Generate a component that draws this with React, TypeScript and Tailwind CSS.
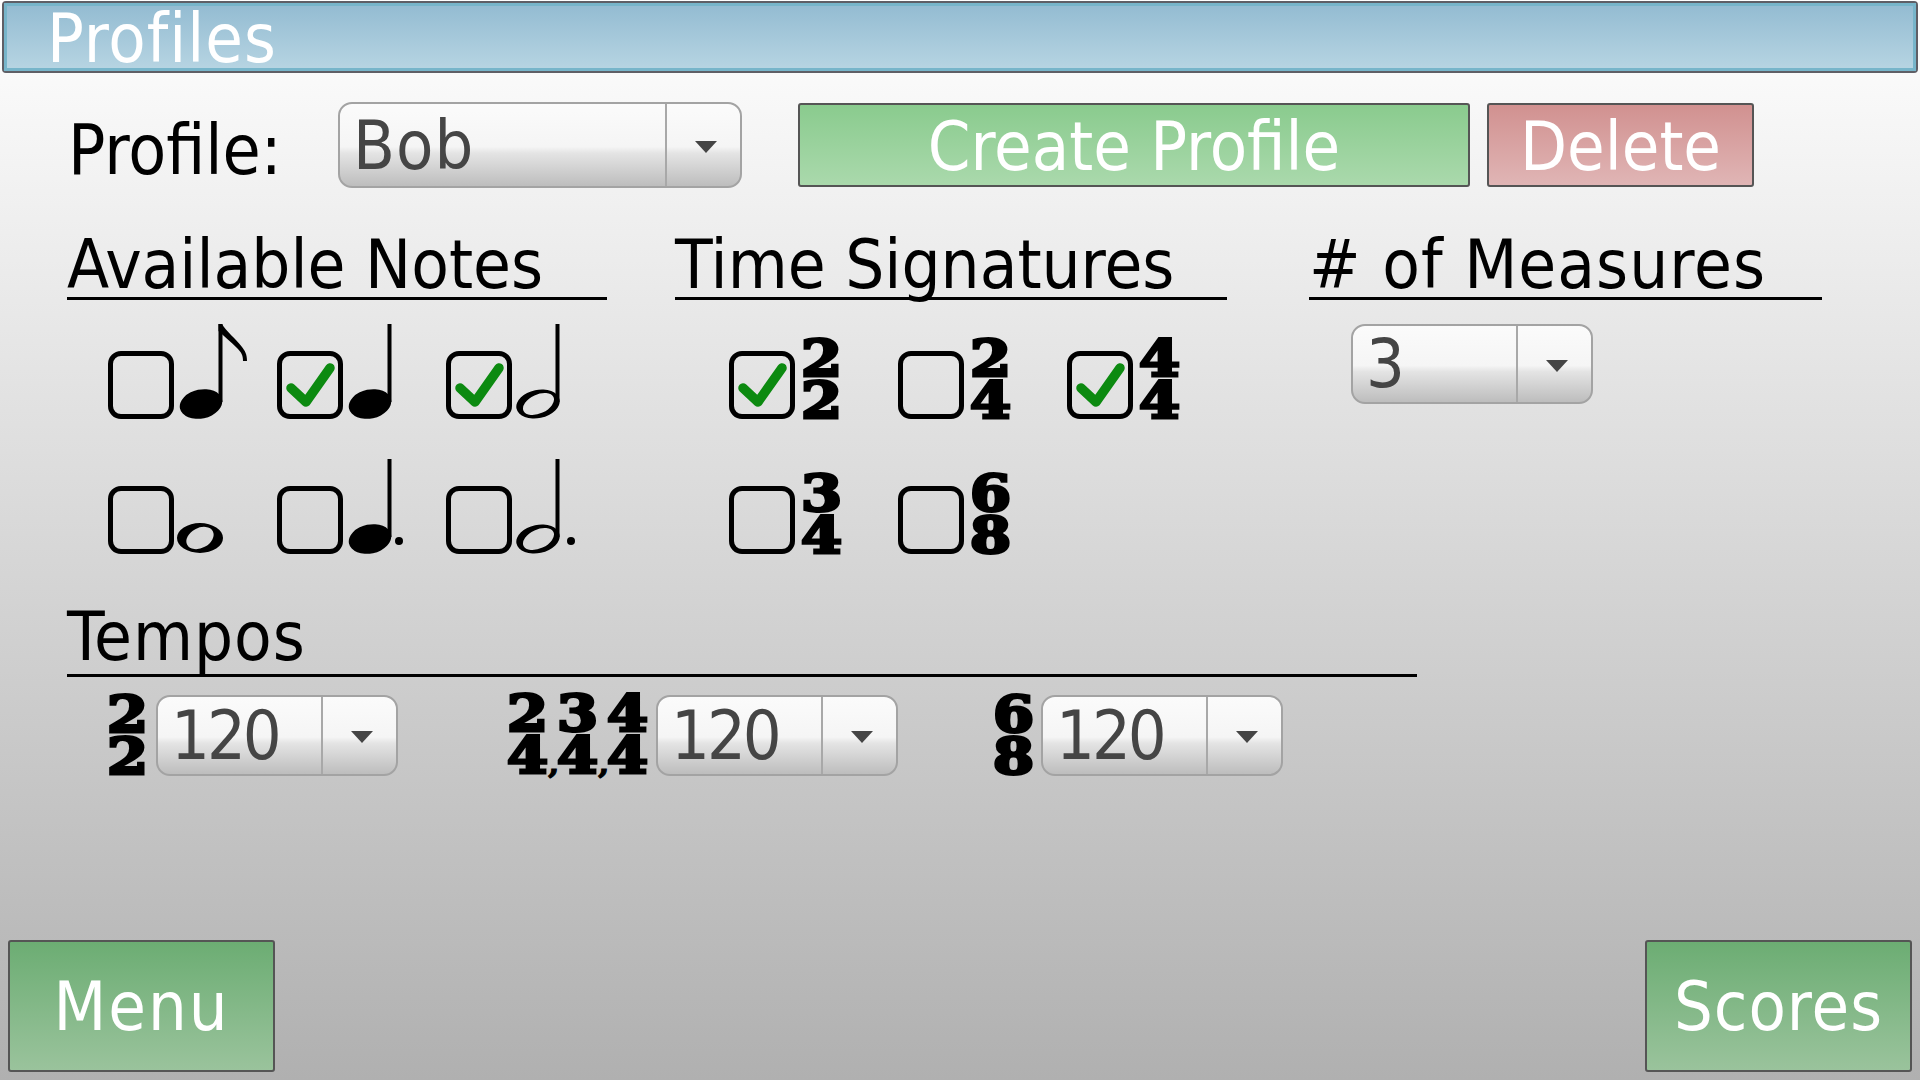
import React, { FC, ReactNode } from "react";

const sans = "font-['DejaVu_Sans_Condensed','DejaVu_Sans',sans-serif] [font-stretch:condensed]";

interface ComboProps {
  value: string;
  className: string;
  textClass?: string;
}

const Combo: FC<ComboProps> = ({ value, className, textClass }) => (
  <div
    className={[
      "flex shrink-0 rounded-[14px] border-2 border-[#a3a3a3] text-[#454545] text-[68px] leading-none",
      "bg-[linear-gradient(180deg,#fbfbfb_0%,#f5f5f5_52%,#e4e4e4_60%,#bdbdbd_100%)]",
      className,
    ].join(" ")}
  >
    <div className={["flex flex-1 items-center pl-[13px]", textClass ?? ""].join(" ")}>{value}</div>
    <div className="flex w-[75px] items-center justify-center border-l-2 border-[#a8a8a8] pt-[3px]">
      <div className="ml-[5px] h-0 w-0 border-x-[11px] border-t-[12px] border-x-transparent border-t-[#454545]" />
    </div>
  </div>
);

// ellipse as a path so open noteheads can use evenodd
const ell = (cx: number, cy: number, rx: number, ry: number, rot: number) => {
  const a = (rot * Math.PI) / 180;
  const dx = rx * Math.cos(a);
  const dy = rx * Math.sin(a);
  return `M${cx - dx} ${cy - dy}A${rx} ${ry} ${rot} 1 0 ${cx + dx} ${cy + dy}A${rx} ${ry} ${rot} 1 0 ${cx - dx} ${cy - dy}Z`;
};

type NoteKind = "eighth" | "quarter" | "half" | "whole" | "dottedQuarter" | "dottedHalf";

const Note: FC<{ kind: NoteKind }> = ({ kind }) => {
  const open = kind === "half" || kind === "dottedHalf";
  const dotted = kind === "dottedQuarter" || kind === "dottedHalf";
  return (
    <svg width="90" height="100" viewBox="0 0 90 100" className="shrink-0">
      {kind === "whole" ? (
        <path
          fillRule="evenodd"
          d={ell(26, 81, 23, 15, 0) + ell(26, 81, 14.5, 10, -28)}
          fill="#000"
        />
      ) : open ? (
        <path
          fillRule="evenodd"
          d={ell(26, 82, 22, 14, -12) + ell(26.5, 82, 16.5, 9.5, -25)}
          fill="#000"
        />
      ) : (
        <ellipse cx="27" cy="82" rx="21.5" ry="14.5" transform="rotate(-12 27 82)" fill="#000" />
      )}
      {kind !== "whole" && <rect x={open ? 43.5 : 44.5} y="2" width="4" height="78" fill="#000" />}
      {kind === "eighth" && (
        <path d="M44.5 2L48 2C52 9 62 17 68 25C71 29 73 32 73 39L69 39C69 33 67 30 63 26C57 20 50 14 44.5 9Z" fill="#000" />
      )}
      {dotted && <circle cx={open ? 59 : 56} cy="84" r="4" fill="#000" />}
    </svg>
  );
};

const CheckBox: FC<{ checked?: boolean }> = ({ checked }) => (
  <div className="mb-[3px] h-[68px] w-[66px] shrink-0 rounded-[13px] border-[5px] border-black">
    {checked && (
      <svg width="56" height="58" viewBox="0 0 56 58">
        <path d="M9 32L24 46L48 12" fill="none" stroke="#0c8a10" strokeWidth="9.5" strokeLinecap="round" strokeLinejoin="round" />
      </svg>
    )}
  </div>
);

const Sig: FC<{ top: string; bottom: ReactNode; className?: string }> = ({ top, bottom, className }) => (
  <div
    className={[
      "shrink-0 origin-left scale-x-[1.18] whitespace-pre font-['DejaVu_Serif',serif] text-[50px] font-bold leading-[42px] text-black [-webkit-text-stroke:3px_black] [font-stretch:normal]",
      className ?? "",
    ].join(" ")}
  >
    <div>{top}</div>
    <div>{bottom}</div>
  </div>
);

const Comma = () => <span className="text-[28px] leading-none [-webkit-text-stroke:1px_black]">,</span>;

const Heading: FC<{ label: string; className: string }> = ({ label, className }) => (
  <div className={["flex items-end border-b-[3px] border-black text-black text-[68.5px] leading-none", className].join(" ")}>
    <span className="mb-[-1px]">{label}</span>
  </div>
);

const noteCells: { kind: NoteKind; checked?: boolean }[] = [
  { kind: "eighth" },
  { kind: "quarter", checked: true },
  { kind: "half", checked: true },
  { kind: "whole" },
  { kind: "dottedQuarter" },
  { kind: "dottedHalf" },
];

const sigCells = [
  { top: "2", bottom: "2", checked: true },
  { top: "2", bottom: "4" },
  { top: "4", bottom: "4", checked: true },
  { top: "3", bottom: "4" },
  { top: "6", bottom: "8" },
];

const greenBtn = "bg-[linear-gradient(180deg,#6cad73_0%,#9ac39c_100%)]";

export default function App() {
  return (
    <div className={`flex h-[1080px] w-[1920px] flex-col overflow-hidden bg-[linear-gradient(180deg,#ffffff_0%,#b0b0b0_100%)] ${sans}`}>
      <div className="mx-[2px] mt-[1px] h-[72px] rounded-[4px] border-2 border-[#5f5f66]">
        <div className="flex h-full items-center border-[3px] border-[#77b5ca] bg-[linear-gradient(180deg,#94bcd2_0%,#b6d4e2_100%)] pl-[40px] pt-[4px] text-[68px] leading-none tracking-[1px] text-white">
          Profiles
        </div>
      </div>

      <div className="mt-[29px] flex h-[86px] items-center pl-[68px]">
        <div className="w-[270px] pt-[10px] text-[69px] leading-none text-black">Profile:</div>
        <Combo value="Bob" className="h-[86px] w-[404px]" textClass="pt-[2px] tracking-[1px]" />
        <div className="ml-[56px] flex h-[84px] w-[672px] items-center justify-center rounded-[3px] border-2 border-[#555] bg-[linear-gradient(180deg,#8acb8e_0%,#aad9ac_100%)] pt-[4px] text-[68px] leading-none text-white">
          Create Profile
        </div>
        <div className="ml-[17px] flex h-[84px] w-[267px] items-center justify-center rounded-[3px] border-2 border-[#555] bg-[linear-gradient(180deg,#d19190_0%,#e0b5b5_100%)] pt-[4px] text-[68px] leading-none text-white">
          Delete
        </div>
      </div>

      <div className="mt-[42px] flex pl-[67px]">
        <div className="w-[540px]">
          <Heading label="Available Notes" className="h-[70px]" />
          <div className="mt-[22px] grid grid-cols-[169px_169px_169px] gap-y-[35px] pl-[41px]">
            {noteCells.map((c) => (
              <div key={c.kind} className="flex h-[100px] items-end">
                <CheckBox checked={c.checked} />
                <Note kind={c.kind} />
              </div>
            ))}
          </div>
        </div>
        <div className="ml-[68px] w-[552px]">
          <Heading label="Time Signatures" className="h-[70px]" />
          <div className="mt-[22px] grid grid-cols-[169px_169px_169px] gap-y-[35px] pl-[54px]">
            {sigCells.map((c) => (
              <div key={c.top + c.bottom} className="flex h-[100px] items-end">
                <CheckBox checked={c.checked} />
                <Sig top={c.top} bottom={c.bottom} className="ml-[6px]" />
              </div>
            ))}
          </div>
        </div>
        <div className="ml-[82px] w-[513px]">
          <Heading label="# of Measures" className="h-[70px] tracking-[1px]" />
          <Combo value="3" className="ml-[42px] mt-[24px] h-[80px] w-[242px]" />
        </div>
      </div>

      <div className="ml-[67px] mt-[50px] w-[1350px]">
        <Heading label="Tempos" className="h-[70px] pb-[5px] tracking-[1px]" />
      </div>

      <div className="mt-[18px] flex h-[81px] items-center pl-[107px]">
        <Sig top="2" bottom="2" className="w-[49px]" />
        <Combo value="120" className="h-[81px] w-[242px]" textClass="tracking-[-3px]" />
        <div className="ml-[109px] flex w-[149px] shrink-0">
          <Sig top="2" bottom={<>4<Comma /></>} className="w-[50px]" />
          <Sig top="3" bottom={<>4<Comma /></>} className="w-[50px]" />
          <Sig top="4" bottom="4" className="w-[49px]" />
        </div>
        <Combo value="120" className="h-[81px] w-[242px]" textClass="tracking-[-3px]" />
        <Sig top="6" bottom="8" className="ml-[95px] w-[48px]" />
        <Combo value="120" className="h-[81px] w-[242px]" textClass="tracking-[-3px]" />
      </div>

      <div className="mt-auto mb-[8px] flex justify-between px-[8px]">
        <div className={`flex h-[132px] w-[267px] items-center justify-center rounded-[3px] border-2 border-[#555] pt-[2px] text-[68px] leading-none tracking-[2px] text-white ${greenBtn}`}>
          Menu
        </div>
        <div className={`flex h-[132px] w-[267px] items-center justify-center rounded-[3px] border-2 border-[#555] pt-[2px] text-[68px] leading-none tracking-[1px] text-white ${greenBtn}`}>
          Scores
        </div>
      </div>
    </div>
  );
}
